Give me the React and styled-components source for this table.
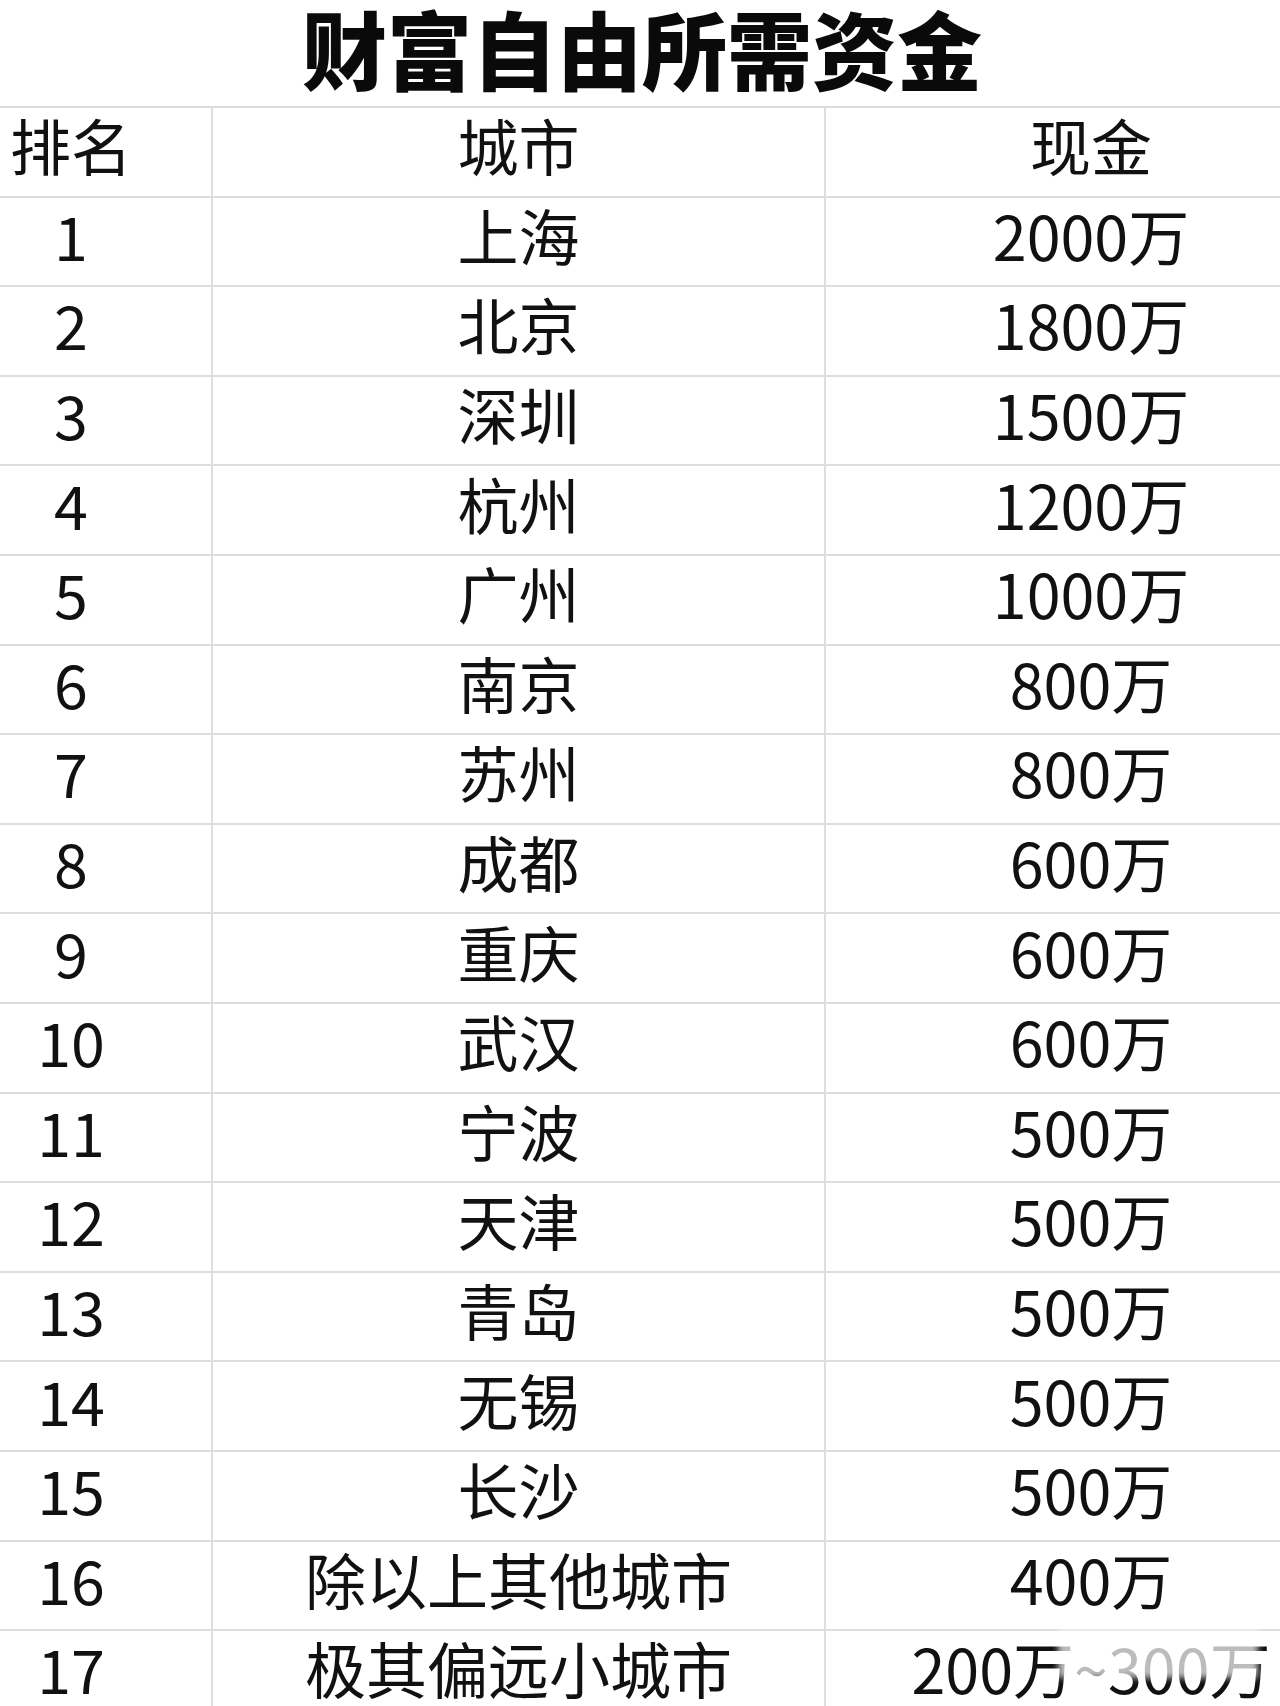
import React from 'react';
import styled, { createGlobalStyle } from 'styled-components';

const GlobalStyle = createGlobalStyle`
    html, body {
        margin: 0;
        padding: 0;
        background: #ffffff;
    }
    body {
        font-family: "Noto Sans CJK SC", "Noto Sans", sans-serif;
        color: #111111;
    }
`;

const Page = styled.div`
    position: relative;
    width: 1280px;
    height: 1706px;
    overflow: hidden;
    background: #ffffff;
`;

const Title = styled.h1`
    margin: 0;
    height: 106px;
    display: flex;
    justify-content: center;
    padding-left: 4px;
    box-sizing: border-box;
    font-size: 85px;
    line-height: 94px;
    font-weight: 900;
    color: #0a0a0a;
`;

const Table = styled.div`
    display: grid;
    grid-template-columns: 211px 613px 1fr;
    grid-auto-rows: 89.6px;
`;

const Cell = styled.div`
    display: flex;
    align-items: center;
    justify-content: center;
    box-sizing: border-box;
    border-top: 2px solid #dedede;
    border-left: ${p => (p.col === 0 ? 'none' : '2px solid #dedede')};
    padding-left: ${p => (p.col === 2 ? '76px' : '0')};
    padding-right: ${p => (p.col === 0 ? '69px' : '0')};
    padding-bottom: 14px;
    font-size: 61px;
    line-height: 1;
    font-weight: 400;
    white-space: nowrap;
    color: #111111;
`;

const Watermark = styled.div`
    position: absolute;
    left: 1058px;
    top: 1630px;
    width: 200px;
    height: 48px;
    background: rgba(255, 255, 255, 0.72);
    filter: blur(3px);
`;

const rows = [
    ['上海', '2000万'],
    ['北京', '1800万'],
    ['深圳', '1500万'],
    ['杭州', '1200万'],
    ['广州', '1000万'],
    ['南京', '800万'],
    ['苏州', '800万'],
    ['成都', '600万'],
    ['重庆', '600万'],
    ['武汉', '600万'],
    ['宁波', '500万'],
    ['天津', '500万'],
    ['青岛', '500万'],
    ['无锡', '500万'],
    ['长沙', '500万'],
    ['除以上其他城市', '400万'],
    ['极其偏远小城市', '200万~300万'],
];

function App() {
    return (
        <Page>
            <GlobalStyle />
            <Title>财富自由所需资金</Title>
            <Table>
                <Cell col={0}>排名</Cell>
                <Cell col={1}>城市</Cell>
                <Cell col={2}>现金</Cell>
                {rows.map(([city, cash], i) => (
                    <React.Fragment key={city}>
                        <Cell col={0}>{i + 1}</Cell>
                        <Cell col={1}>{city}</Cell>
                        <Cell col={2}>{cash}</Cell>
                    </React.Fragment>
                ))}
            </Table>
            <Watermark />
        </Page>
    );
}

export default App;
